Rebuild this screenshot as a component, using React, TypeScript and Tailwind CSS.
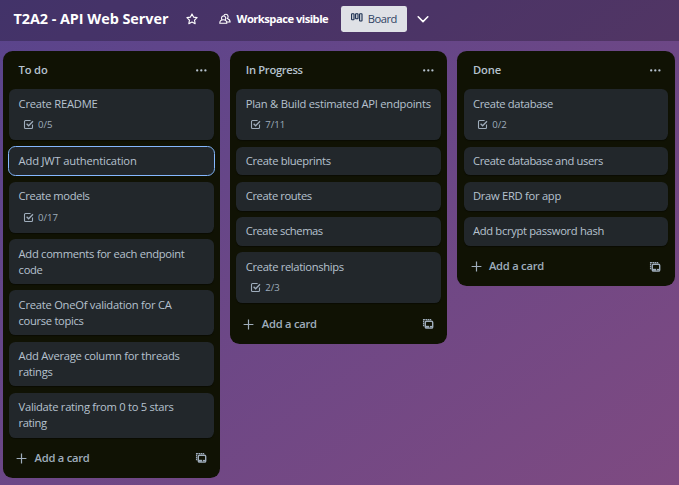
import React from "react";

type CardData = { title: string; badge?: string; w: number; active?: boolean };
type ListData = { name: string; cards: CardData[] };

const lists: ListData[] = [
  {
    name: "To do",
    cards: [
      { title: "Create README", badge: "0/5", w: 79 },
      { title: "Add JWT authentication", w: 118, active: true },
      { title: "Create models", badge: "0/17", w: 71 },
      { title: "Add comments for each endpoint\ncode", w: 166 },
      { title: "Create OneOf validation for CA\ncourse topics", w: 153 },
      { title: "Add Average column for threads\nratings", w: 161 },
      { title: "Validate rating from 0 to 5 stars\nrating", w: 155 },
    ],
  },
  {
    name: "In Progress",
    cards: [
      { title: "Plan & Build estimated API endpoints", badge: "7/11", w: 185 },
      { title: "Create blueprints", w: 85 },
      { title: "Create routes", w: 66 },
      { title: "Create schemas", w: 77 },
      { title: "Create relationships", badge: "2/3", w: 98 },
    ],
  },
  {
    name: "Done",
    cards: [
      { title: "Create database", badge: "0/2", w: 80 },
      { title: "Create database and users", w: 130 },
      { title: "Draw ERD for app", w: 88 },
      { title: "Add bcrypt password hash", w: 131 },
    ],
  },
];

const secondLineWidths: Record<string, number> = {
  code: 24,
  "course topics": 65,
  ratings: 34,
  rating: 28,
};

/* Text tracked to an exact rendered width. */
function Fit({ text, width }: { text: string; width: number }) {
  const ref = React.useRef<HTMLSpanElement>(null);
  React.useLayoutEffect(() => {
    const el = ref.current;
    if (!el) return;
    el.style.letterSpacing = "0px";
    const natural = el.getBoundingClientRect().width;
    el.style.letterSpacing = `${(width - natural) / text.length}px`;
  }, [text, width]);
  return (
    <span ref={ref} className="inline-block whitespace-pre">
      {text}
    </span>
  );
}

function Dots() {
  return (
    <svg className="h-3 w-3" viewBox="0 0 12 12" fill="currentColor">
      <circle cx="2.2" cy="6.4" r="1.15" />
      <circle cx="6.3" cy="6.4" r="1.15" />
      <circle cx="10.4" cy="6.4" r="1.15" />
    </svg>
  );
}

function Check() {
  return (
    <svg className="h-[11px] w-[11px]" viewBox="0 0 11 11" fill="none" stroke="currentColor" strokeWidth="1.1">
      <path d="M7.6 1.5H2.5a1 1 0 0 0-1 1v6a1 1 0 0 0 1 1h6a1 1 0 0 0 1-1V5.6" />
      <path d="M3.6 4.8l2 2L10 2.2" strokeWidth="1.3" />
    </svg>
  );
}

function Template() {
  return (
    <svg className="h-3 w-3" viewBox="0 0 12 12" fill="none" stroke="currentColor">
      <path d="M1.6 8.2V1.6h7.8" strokeWidth="1.3" strokeDasharray="1.6 .5" />
      <rect x="3.3" y="3.3" width="7.4" height="6.8" rx="1.2" strokeWidth="1.4" />
      <path d="M3.4 8.8h3.8" strokeWidth="2" />
      <path d="M8 8.7h2.4" strokeWidth="1.6" />
    </svg>
  );
}

function Card({ card }: { card: CardData }) {
  const [first, ...rest] = card.title.split("\n");
  return (
    <div
      className={`rounded-[6.4px] bg-[#22272b] px-[9.4px] py-[6.4px] text-[11.2px] leading-4 text-[#b6c2cf] shadow-[0_1px_1px_#00000060] ${
        card.active ? "outline-[1.4px] outline-[#85b8ff]" : ""
      }`}
    >
      <div className="h-4">
        <Fit text={first} width={card.w} />
      </div>
      {rest.map((line) => (
        <div key={line} className="h-4">
          <Fit text={line} width={secondLineWidths[line]} />
        </div>
      ))}
      {card.badge && (
        <div className="mt-[5.3px] mb-[1px] flex h-4 items-center gap-[4px] pl-[4.4px] text-[9.6px] text-[#9fadbc]">
          <Check />
          <span>{card.badge}</span>
        </div>
      )}
    </div>
  );
}

function List({ list }: { list: ListData }) {
  const widths: Record<string, number> = { "To do": 29, "In Progress": 57, Done: 28 };
  return (
    <section className="w-[217.4px] shrink-0 rounded-[9.6px] bg-[#101204] px-[6.3px] text-[#b6c2cf]">
      <header className="flex h-[38px] items-center justify-between pr-[7px] pl-[9.4px] text-[11.2px] font-semibold">
        <Fit text={list.name} width={widths[list.name]} />
        <Dots />
      </header>
      <div className="flex flex-col gap-[6.4px]">
        {list.cards.map((c) => (
          <Card key={c.title} card={c} />
        ))}
      </div>
      <footer className="flex h-[40.6px] items-center pt-[1px] pr-[7px] pl-[7px] text-[11.2px] font-semibold text-[#9fadbc]">
        <svg className="mr-[7.4px] h-[11px] w-[11px]" viewBox="0 0 11 11" stroke="currentColor" strokeWidth="1.2">
          <path d="M5.5.6v9.8M.6 5.5h9.8" />
        </svg>
        <Fit text="Add a card" width={55} />
        <span className="ml-auto">
          <Template />
        </span>
      </footer>
    </section>
  );
}

export default function App() {
  return (
    <main className="h-[485px] w-[679px] overflow-hidden bg-linear-[145deg,#59448c,#7e4a81] font-['Open_Sans','Noto_Sans',sans-serif]">
      <div className="flex h-[41px] items-center bg-black/25 pb-[3px] pl-[13.4px] text-white">
        <h1 className="text-[14.4px] leading-5 font-bold">
          <Fit text="T2A2 - API Web Server" width={155} />
        </h1>
        <svg className="ml-[18px] h-3 w-3" viewBox="0 0 12 12" fill="none" stroke="currentColor" strokeWidth="1.1" strokeLinejoin="round">
          <path d="M6 .9l1.55 3.2 3.55.5-2.55 2.5.6 3.6L6 9l-3.15 1.7.6-3.6L.9 4.6l3.55-.5z" />
        </svg>
        <svg className="ml-[20.2px] h-3 w-3" viewBox="0 0 12 12" fill="none" stroke="currentColor" strokeWidth="1.1">
          <path d="M.8 10.2c0-2 1.3-3.4 3.5-3.4S7.8 8.2 7.8 10.2z" />
          <path d="M3 6.9C1.8 4.6 3 3 4.7 3s2.8 1.8 1.5 4" />
          <path d="M4.8 3c.4-2.2 4.1-2.4 4.3.4 0 1-.3 1.6-.7 2.1 1.8.6 2.7 1.7 2.7 3.5H8" />
        </svg>
        <span className="ml-[6px] text-[11.2px] font-bold">
          <Fit text="Workspace visible" width={91.6} />
        </span>
        <div className="ml-[12.6px] flex h-[26px] w-[66px] items-center rounded-[2.4px] bg-[#dfe1e6] pl-[10px] text-[11.2px] text-[#2f4263]">
          <svg className="mr-[5px] mb-[3px] h-[9px] w-3" viewBox="0 0 12 9" fill="none" stroke="#172b4d" strokeWidth="1.1">
            <rect x=".6" y=".8" width="2.4" height="6" rx=".5" />
            <rect x="4.6" y=".8" width="2.4" height="5" rx=".5" />
            <rect x="8.6" y=".8" width="2.4" height="7.2" rx=".5" />
          </svg>
          <Fit text="Board" width={29} />
        </div>
        <svg className="ml-[10px] h-3 w-3" viewBox="0 0 12 12" fill="none" stroke="currentColor" strokeWidth="1.6" strokeLinecap="round" strokeLinejoin="round">
          <path d="M1.2 3.8L6 8.6l4.8-4.8" />
        </svg>
      </div>
      <div className="flex items-start gap-[9.8px] pt-[10.2px] pl-[2.9px]">
        {lists.map((l) => (
          <List key={l.name} list={l} />
        ))}
      </div>
    </main>
  );
}
